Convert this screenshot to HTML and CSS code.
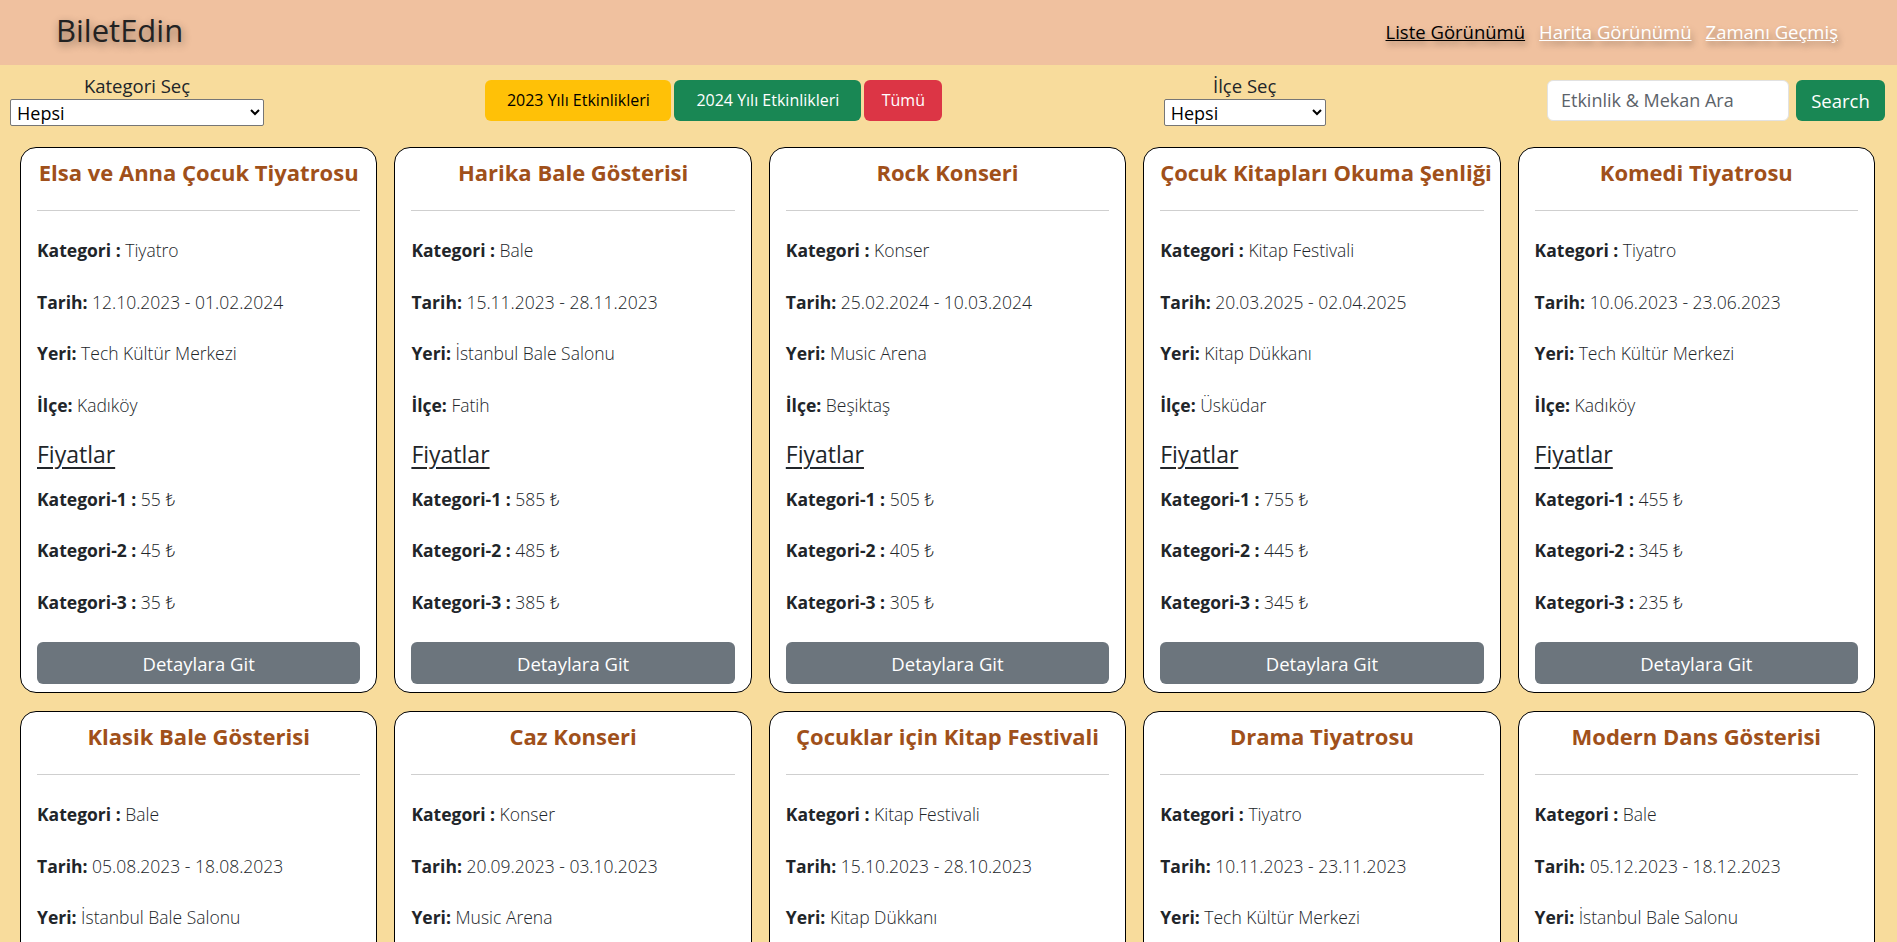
FILE: index.html
```html
<!DOCTYPE html>
<html lang="tr">
<head>
<meta charset="utf-8">
<title>BiletEdin</title>
<link rel="stylesheet" href="styles.css">
</head>
<body>
<header class="topbar">
  <div class="logo">BiletEdin</div>
  <nav class="nav">
    <a href="#" class="nav-link active">Liste Görünümü</a>
    <a href="#" class="nav-link">Harita Görünümü</a>
    <a href="#" class="nav-link">Zamanı Geçmiş</a>
  </nav>
</header>

<section class="filters">
  <div class="filter-block">
    <label class="filter-label">Kategori Seç</label>
    <select class="filter-select cat-select"><option>Hepsi</option></select>
  </div>
  <div class="year-buttons">
    <button class="btn btn-yellow">2023 Yılı Etkinlikleri</button>
    <button class="btn btn-green">2024 Yılı Etkinlikleri</button>
    <button class="btn btn-red">Tümü</button>
  </div>
  <div class="filter-block">
    <label class="filter-label">İlçe Seç</label>
    <select class="filter-select ilce-select"><option>Hepsi</option></select>
  </div>
  <div class="search">
    <input class="search-input" type="text" placeholder="Etkinlik &amp; Mekan Ara">
    <button class="btn btn-green search-btn">Search</button>
  </div>
</section>

<main class="grid">
  <article class="card">
    <h5 class="card-title">Elsa ve Anna Çocuk Tiyatrosu</h5>
    <hr class="divider">
    <p class="row"><b>Kategori :</b> <span>Tiyatro</span></p>
    <p class="row"><b>Tarih:</b> <span>12.10.2023 - 01.02.2024</span></p>
    <p class="row"><b>Yeri:</b> <span>Tech Kültür Merkezi</span></p>
    <p class="row row-last"><b>İlçe:</b> <span>Kadıköy</span></p>
    <h4 class="prices-title">Fiyatlar</h4>
    <p class="price p1"><b>Kategori-1 :</b> <span>55 ₺</span></p>
    <p class="price"><b>Kategori-2 :</b> <span>45 ₺</span></p>
    <p class="price"><b>Kategori-3 :</b> <span>35 ₺</span></p>
    <button class="detail-btn">Detaylara Git</button>
  </article>
  <article class="card">
    <h5 class="card-title">Harika Bale Gösterisi</h5>
    <hr class="divider">
    <p class="row"><b>Kategori :</b> <span>Bale</span></p>
    <p class="row"><b>Tarih:</b> <span>15.11.2023 - 28.11.2023</span></p>
    <p class="row"><b>Yeri:</b> <span>İstanbul Bale Salonu</span></p>
    <p class="row row-last"><b>İlçe:</b> <span>Fatih</span></p>
    <h4 class="prices-title">Fiyatlar</h4>
    <p class="price p1"><b>Kategori-1 :</b> <span>585 ₺</span></p>
    <p class="price"><b>Kategori-2 :</b> <span>485 ₺</span></p>
    <p class="price"><b>Kategori-3 :</b> <span>385 ₺</span></p>
    <button class="detail-btn">Detaylara Git</button>
  </article>
  <article class="card">
    <h5 class="card-title">Rock Konseri</h5>
    <hr class="divider">
    <p class="row"><b>Kategori :</b> <span>Konser</span></p>
    <p class="row"><b>Tarih:</b> <span>25.02.2024 - 10.03.2024</span></p>
    <p class="row"><b>Yeri:</b> <span>Music Arena</span></p>
    <p class="row row-last"><b>İlçe:</b> <span>Beşiktaş</span></p>
    <h4 class="prices-title">Fiyatlar</h4>
    <p class="price p1"><b>Kategori-1 :</b> <span>505 ₺</span></p>
    <p class="price"><b>Kategori-2 :</b> <span>405 ₺</span></p>
    <p class="price"><b>Kategori-3 :</b> <span>305 ₺</span></p>
    <button class="detail-btn">Detaylara Git</button>
  </article>
  <article class="card">
    <h5 class="card-title">Çocuk Kitapları Okuma Şenliği</h5>
    <hr class="divider">
    <p class="row"><b>Kategori :</b> <span>Kitap Festivali</span></p>
    <p class="row"><b>Tarih:</b> <span>20.03.2025 - 02.04.2025</span></p>
    <p class="row"><b>Yeri:</b> <span>Kitap Dükkanı</span></p>
    <p class="row row-last"><b>İlçe:</b> <span>Üsküdar</span></p>
    <h4 class="prices-title">Fiyatlar</h4>
    <p class="price p1"><b>Kategori-1 :</b> <span>755 ₺</span></p>
    <p class="price"><b>Kategori-2 :</b> <span>445 ₺</span></p>
    <p class="price"><b>Kategori-3 :</b> <span>345 ₺</span></p>
    <button class="detail-btn">Detaylara Git</button>
  </article>
  <article class="card">
    <h5 class="card-title">Komedi Tiyatrosu</h5>
    <hr class="divider">
    <p class="row"><b>Kategori :</b> <span>Tiyatro</span></p>
    <p class="row"><b>Tarih:</b> <span>10.06.2023 - 23.06.2023</span></p>
    <p class="row"><b>Yeri:</b> <span>Tech Kültür Merkezi</span></p>
    <p class="row row-last"><b>İlçe:</b> <span>Kadıköy</span></p>
    <h4 class="prices-title">Fiyatlar</h4>
    <p class="price p1"><b>Kategori-1 :</b> <span>455 ₺</span></p>
    <p class="price"><b>Kategori-2 :</b> <span>345 ₺</span></p>
    <p class="price"><b>Kategori-3 :</b> <span>235 ₺</span></p>
    <button class="detail-btn">Detaylara Git</button>
  </article>

  <article class="card">
    <h5 class="card-title">Klasik Bale Gösterisi</h5>
    <hr class="divider">
    <p class="row"><b>Kategori :</b> <span>Bale</span></p>
    <p class="row"><b>Tarih:</b> <span>05.08.2023 - 18.08.2023</span></p>
    <p class="row"><b>Yeri:</b> <span>İstanbul Bale Salonu</span></p>
    <p class="row row-last"><b>İlçe:</b> <span>Fatih</span></p>
    <h4 class="prices-title">Fiyatlar</h4>
    <p class="price p1"><b>Kategori-1 :</b> <span>600 ₺</span></p>
    <p class="price"><b>Kategori-2 :</b> <span>500 ₺</span></p>
    <p class="price"><b>Kategori-3 :</b> <span>400 ₺</span></p>
    <button class="detail-btn">Detaylara Git</button>
  </article>
  <article class="card">
    <h5 class="card-title">Caz Konseri</h5>
    <hr class="divider">
    <p class="row"><b>Kategori :</b> <span>Konser</span></p>
    <p class="row"><b>Tarih:</b> <span>20.09.2023 - 03.10.2023</span></p>
    <p class="row"><b>Yeri:</b> <span>Music Arena</span></p>
    <p class="row row-last"><b>İlçe:</b> <span>Beşiktaş</span></p>
    <h4 class="prices-title">Fiyatlar</h4>
    <p class="price p1"><b>Kategori-1 :</b> <span>520 ₺</span></p>
    <p class="price"><b>Kategori-2 :</b> <span>420 ₺</span></p>
    <p class="price"><b>Kategori-3 :</b> <span>320 ₺</span></p>
    <button class="detail-btn">Detaylara Git</button>
  </article>
  <article class="card">
    <h5 class="card-title">Çocuklar için Kitap Festivali</h5>
    <hr class="divider">
    <p class="row"><b>Kategori :</b> <span>Kitap Festivali</span></p>
    <p class="row"><b>Tarih:</b> <span>15.10.2023 - 28.10.2023</span></p>
    <p class="row"><b>Yeri:</b> <span>Kitap Dükkanı</span></p>
    <p class="row row-last"><b>İlçe:</b> <span>Üsküdar</span></p>
    <h4 class="prices-title">Fiyatlar</h4>
    <p class="price p1"><b>Kategori-1 :</b> <span>75 ₺</span></p>
    <p class="price"><b>Kategori-2 :</b> <span>65 ₺</span></p>
    <p class="price"><b>Kategori-3 :</b> <span>55 ₺</span></p>
    <button class="detail-btn">Detaylara Git</button>
  </article>
  <article class="card">
    <h5 class="card-title">Drama Tiyatrosu</h5>
    <hr class="divider">
    <p class="row"><b>Kategori :</b> <span>Tiyatro</span></p>
    <p class="row"><b>Tarih:</b> <span>10.11.2023 - 23.11.2023</span></p>
    <p class="row"><b>Yeri:</b> <span>Tech Kültür Merkezi</span></p>
    <p class="row row-last"><b>İlçe:</b> <span>Kadıköy</span></p>
    <h4 class="prices-title">Fiyatlar</h4>
    <p class="price p1"><b>Kategori-1 :</b> <span>355 ₺</span></p>
    <p class="price"><b>Kategori-2 :</b> <span>255 ₺</span></p>
    <p class="price"><b>Kategori-3 :</b> <span>155 ₺</span></p>
    <button class="detail-btn">Detaylara Git</button>
  </article>
  <article class="card">
    <h5 class="card-title">Modern Dans Gösterisi</h5>
    <hr class="divider">
    <p class="row"><b>Kategori :</b> <span>Bale</span></p>
    <p class="row"><b>Tarih:</b> <span>05.12.2023 - 18.12.2023</span></p>
    <p class="row"><b>Yeri:</b> <span>İstanbul Bale Salonu</span></p>
    <p class="row row-last"><b>İlçe:</b> <span>Fatih</span></p>
    <h4 class="prices-title">Fiyatlar</h4>
    <p class="price p1"><b>Kategori-1 :</b> <span>650 ₺</span></p>
    <p class="price"><b>Kategori-2 :</b> <span>550 ₺</span></p>
    <p class="price"><b>Kategori-3 :</b> <span>450 ₺</span></p>
    <button class="detail-btn">Detaylara Git</button>
  </article>
</main>
</body>
</html>
```
FILE: styles.css
```css
html { scrollbar-width: none; }
html::-webkit-scrollbar { display: none; }

body {
  margin: 0;
  background: #f8dc9c;
  font-family: "Open Sans", "Noto Sans", sans-serif;
  color: #212529;
  font-size: 16px;
}

.topbar {
  height: 65px;
  background: #f0c19f;
  display: flex;
  align-items: center;
  justify-content: space-between;
  padding: 0 59px 0 56px;
}

.logo {
  font-size: 31px;
  font-weight: 400;
  color: #222;
  text-shadow: 1px 3px 8px rgba(0, 0, 0, 0.45);
  margin-top: -5px;
}

.nav {
  display: flex;
  gap: 14px;
  margin-top: -3px;
}

.nav-link {
  font-size: 18.5px;
  color: #fff;
  text-decoration: underline;
  text-shadow: 2px 4px 6px rgba(0, 0, 0, 0.35);
}

.nav-link.active { color: #000; }

.filters {
  display: flex;
  align-items: center;
  justify-content: space-between;
  padding: 9px 12px 0 10px;
}

.filter-block {
  display: flex;
  flex-direction: column;
  align-items: center;
}

.filter-label {
  font-size: 18.5px;
  line-height: 24px;
  height: 25px;
}

.filter-select {
  height: 27px;
  font-family: inherit;
  font-size: 18px;
  background: #fff;
  border: 1px solid #767676;
  border-radius: 2px;
  color: #000;
  padding: 0 2px;
}

.cat-select { width: 254px; }
.ilce-select { width: 162px; }

.year-buttons {
  display: flex;
  gap: 3px;
}

.btn {
  height: 41px;
  border: none;
  border-radius: 6px;
  font-family: inherit;
  font-size: 16px;
  padding: 0 10px;
  cursor: pointer;
}

.btn-yellow { background: #ffc107; color: #000; width: 186px; }
.btn-green { background: #198754; color: #fff; width: 187px; }
.btn-red { background: #dc3545; color: #fff; width: 78px; }

.search {
  display: flex;
  gap: 7px;
}

.search-input {
  width: 242px;
  height: 41px;
  box-sizing: border-box;
  border: 1px solid #e2e2e2;
  border-radius: 6px;
  background: #fff;
  padding: 0 13px;
  font-family: inherit;
  font-size: 18px;
}

.search-input::placeholder { color: #5c636a; }

.search-btn.btn-green { width: 89px; font-size: 18.5px; }

.grid {
  display: grid;
  grid-template-columns: repeat(5, minmax(0, 1fr));
  column-gap: 17px;
  row-gap: 18px;
  padding: 21px 22px 20px 20px;
}

.card {
  background: #fff;
  border: 1px solid #000;
  border-radius: 16px;
  padding: 9px 16px 8px;
  display: flex;
  flex-direction: column;
  min-width: 0;
}

.card-title {
  margin: 0;
  line-height: 30px;
  font-size: 22px;
  font-weight: 700;
  color: #a0501a;
  text-align: center;
  white-space: nowrap;
}

.divider {
  margin: 23px 0 27px;
  border: 0;
  border-top: 1px solid #cfcfcf;
  height: 0;
}

.row, .price {
  margin: 0 0 27.5px;
  line-height: 24px;
  font-size: 17.5px;
}

.row b, .price b { font-weight: 700; }
.row span, .price span { font-weight: 300; }

.row-last { margin-bottom: 24px; }

.prices-title {
  margin: 0;
  font-size: 23px;
  font-weight: 400;
  line-height: 26px;
  text-decoration: underline;
  text-underline-offset: 4px;
  text-decoration-thickness: 1.5px;
}

.price.p1 { margin-top: 20px; }
.price { margin-bottom: 27.5px; }

.detail-btn {
  height: 42px;
  width: 100%;
  border: none;
  border-radius: 6px;
  background: #6c757d;
  color: #fff;
  font-family: inherit;
  font-size: 18.5px;
  cursor: pointer;
  margin-top: 1px;
}
```
